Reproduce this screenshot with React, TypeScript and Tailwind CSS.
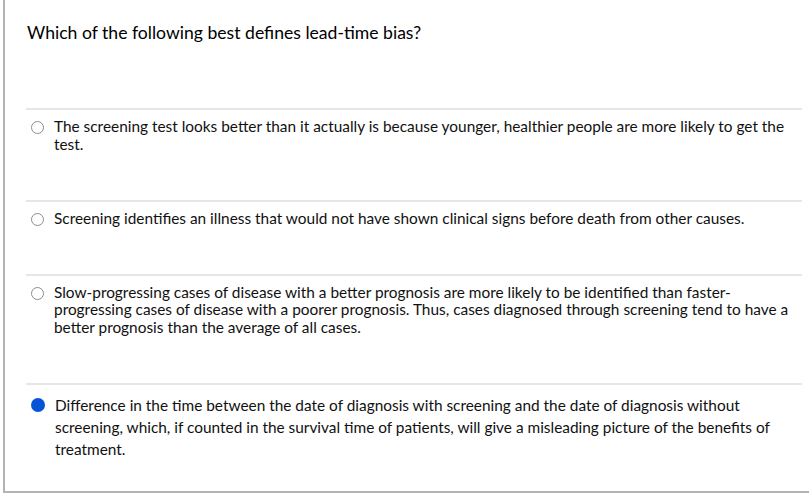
import React from "react";

const options = [
  {
    text: "The screening test looks better than it actually is because younger, healthier people are more likely to get the test.",
    selected: false,
  },
  {
    text: "Screening identifies an illness that would not have shown clinical signs before death from other causes.",
    selected: false,
  },
  {
    text: "Slow-progressing cases of disease with a better prognosis are more likely to be identified than faster-progressing cases of disease with a poorer prognosis. Thus, cases diagnosed through screening tend to have a better prognosis than the average of all cases.",
    selected: false,
  },
  {
    text: "Difference in the time between the date of diagnosis with screening and the date of diagnosis without screening, which, if counted in the survival time of patients, will give a misleading picture of the benefits of treatment.",
    selected: true,
  },
];

function Radio({ selected }: { selected: boolean }) {
  if (selected) {
    return <span className="mt-[4px] block w-[14px] h-[14px] rounded-full bg-[#0553d6] shrink-0" />;
  }
  return (
    <span className="mt-[3px] block w-[13px] h-[13px] rounded-full border border-[#8c8c8c] bg-white shrink-0" />
  );
}

export default function App() {
  return (
    <div
      className="w-[809px] h-[494px] bg-white pl-[3px] text-[#111]"
      style={{ fontFamily: "Lato, 'Liberation Sans', sans-serif" }}
    >
      <div className="h-[493px] border-l-2 border-b-2 border-[#b4b4b4] pl-[21px] pr-[7px]">
        <div className="h-[108px] pt-[21px] pl-[1px] text-[17.6px] leading-[24px] text-black">
          Which of the following best defines lead-time bias?
        </div>
        {options.map((opt, i) => (
          <div
            key={i}
            className={`border-t-2 border-[#e6e6e6] flex gap-[10px] pl-[5px] text-[15.4px] ${
              opt.selected ? "pt-[9px] pb-[30px] leading-[22px]" : "pt-[8px] pb-[46.5px] leading-[17.5px]"
            }`}
          >
            <Radio selected={opt.selected} />
            <p className="flex-1 pr-[2px]">{opt.text}</p>
          </div>
        ))}
      </div>
    </div>
  );
}
